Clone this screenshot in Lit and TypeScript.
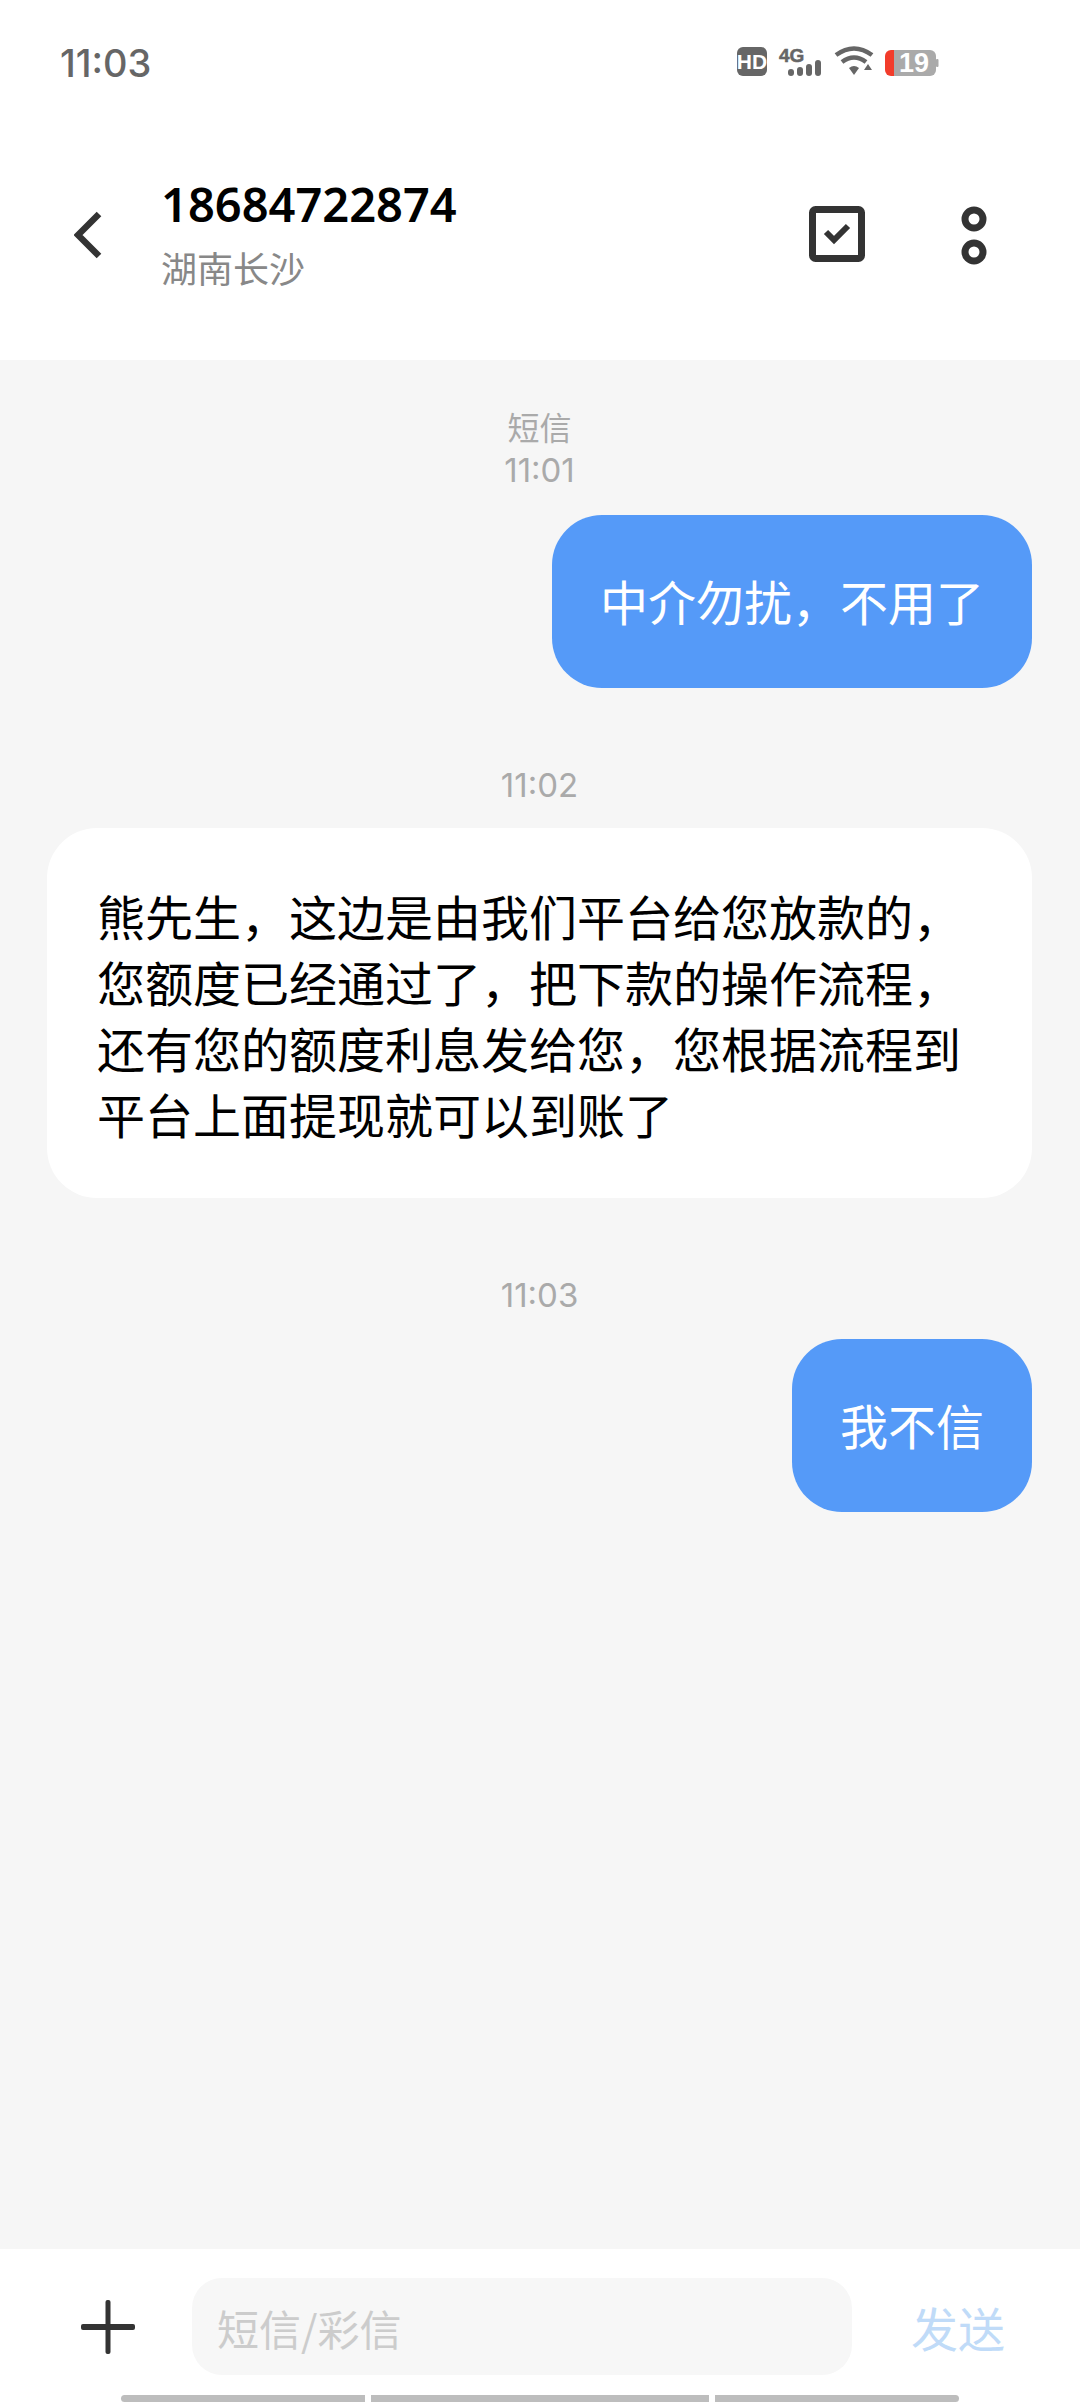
import { LitElement, html, css } from "lit";
import { customElement } from "lit/decorators.js";

const C = "\uFF0C";
const MSG1 = `中介勿扰${C}不用了`;
const MSG2 = `熊先生${C}这边是由我们平台给您放款的${C}您额度已经通过了${C}把下款的操作流程${C}还有您的额度利息发给您${C}您根据流程到平台上面提现就可以到账了`;

@customElement("app-root")
export class AppRoot extends LitElement {
  static styles = css`
    :host {
      display: block;
      width: 1080px;
      height: 2408px;
      font-family: "Noto Sans CJK SC", "Noto Sans", sans-serif;
      background: #fff;
      overflow: hidden;
    }
    .page { display: flex; flex-direction: column; height: 2408px; }
    .status {
      height: 122px; box-sizing: border-box; padding: 40px 141px 0 60px;
      display: flex; justify-content: space-between; align-items: flex-start;
    }
    .clock { font-size: 38px; line-height: 46px; font-weight: 500; color: #666; font-family: Inter, sans-serif; }
    .sicons { display: block; margin-top: 1px; }
    .head { height: 238px; display: flex; align-items: flex-start; box-sizing: border-box; padding: 0 0 0 74px; }
    .back { margin-top: 89px; flex: none; }
    .who { margin-left: 59px; margin-top: 54px; flex: 1; }
    .num { font-size: 47px; line-height: 56px; font-weight: 600; color: #000; font-family: "Noto Sans", sans-serif; }
    .loc { font-size: 36px; line-height: 48px; color: #888; margin-top: 11px; }
    .acts { display: flex; margin: 84px 93px 0 0; gap: 96px; align-items: flex-start; }
    .chat { flex: 1; background: #f6f6f6; padding: 0 48px 0 47px; display: flex; flex-direction: column; }
    .time { text-align: center; font-size: 32px; line-height: 44px; color: #aaa; }
    .time.first { margin-top: 44px; }
    .time.gap { margin-top: 75px; }
    .digits { display: block; font-family: Inter, sans-serif; font-size: 33px; }
    .bubble { font-size: 48px; line-height: 66px; border-radius: 50px; box-sizing: border-box; }
    .me {
      align-self: flex-end; background: #559af8; color: #fff;
      padding: 52px 48px 55px; margin-top: 23px;
    }
    .them {
      background: #fff; color: #000; padding: 54px 50px 52px; margin-top: 21px;
    }
    .time.gap + .me { margin-top: 22px; }
    .foot { height: 159px; box-sizing: border-box; position: relative; padding-top: 29px; }
    .bar { display: flex; align-items: center; height: 97px; }
    .plus { margin-left: 81px; flex: none; }
    .input {
      margin-left: 57px; width: 660px; height: 97px; background: #f7f7f7; border-radius: 30px;
      box-sizing: border-box; padding-left: 25px; font-size: 42px; line-height: 100px; color: #ccc;
    }
    .send { margin-left: 59px; font-size: 47px; color: #c0dbf8; line-height: 99px; }
    .segs { display: flex; gap: 6px; margin: 20px 0 0 121px; }
    .segs i { display: block; height: 7px; background: #bdbdbd; }
    .s1 { width: 244px; border-radius: 4px 0 0 4px; }
    .s2 { width: 338px; }
    .s3 { width: 244px; border-radius: 0 4px 4px 0; }
  `;

  render() {
    return html`
      <div class="page" lang="zh-CN">
        <div class="status">
          <div class="clock">11:03</div>
          <svg class="sicons" width="202" height="42" viewBox="0 -6 202 42">
            <rect x="0" y="0" width="30" height="29" rx="6" fill="#666"/>
            <text x="15" y="21.500" text-anchor="middle" font-family="Liberation Sans" font-weight="700" font-size="21" fill="#fff">HD</text>
            <text x="42" y="15" font-family="Liberation Sans" font-weight="700" font-size="19" fill="#666" stroke="#666" stroke-width="0.5">4G</text>
            <rect x="51" y="22" width="6" height="7" rx="3" fill="#666"/>
            <rect x="60" y="20" width="6" height="9" rx="3" fill="#666"/>
            <rect x="69" y="17" width="6" height="12" rx="3" fill="#666"/>
            <rect x="78" y="13" width="6" height="16" rx="3" fill="#666"/>
            <g fill="none" stroke="#666" stroke-width="4.6">
              <path d="M99 8 Q117 -5 135 8"/>
              <path d="M105 15 Q117 6 129 15"/>
            </g>
            <path d="M112 21 Q117 17 122 21 L117 28 Z" fill="#666"/>
            <path d="M127 23 L135 23 L131 17 Z" fill="#666"/>
            <path d="M154 3 H193 a6 6 0 0 1 6 6 V23 a6 6 0 0 1 -6 6 H154 Z" fill="#aaa"/>
            <path d="M157 3 V29 H154 a6 6 0 0 1 -6 -6 V9 a6 6 0 0 1 6 -6 Z" fill="#f23c2b"/>
            <rect x="199" y="12" width="2.500" height="8" rx="1" fill="#aaa"/>
            <text x="177" y="25" text-anchor="middle" font-family="Liberation Sans" font-weight="700" font-size="27" fill="#fff">19</text>
          </svg>
        </div>
        <div class="head">
          <svg class="back" width="28" height="48" viewBox="0 0 28 48">
            <path d="M25 3 L4 24 L25 45" fill="none" stroke="#333" stroke-width="6.500"/>
          </svg>
          <div class="who">
            <div class="num">18684722874</div>
            <div class="loc">湖南长沙</div>
          </div>
          <div class="acts">
            <svg width="56" height="56" viewBox="0 0 56 56">
              <rect x="3.500" y="3.500" width="49" height="49" rx="3" fill="none" stroke="#333" stroke-width="7"/>
              <path d="M17 26 L25 34 L39 20" fill="none" stroke="#333" stroke-width="6"/>
            </svg>
            <svg width="26" height="60" viewBox="0 0 26 60">
              <circle cx="13" cy="13" r="9" fill="none" stroke="#333" stroke-width="7"/>
              <circle cx="13" cy="46" r="9" fill="none" stroke="#333" stroke-width="7"/>
            </svg>
          </div>
        </div>
        <div class="chat">
          <div class="time first">短信<span class="digits">11:01</span></div>
          <div class="bubble me">${MSG1}</div>
          <div class="time gap"><span class="digits">11:02</span></div>
          <div class="bubble them">${MSG2}</div>
          <div class="time gap"><span class="digits">11:03</span></div>
          <div class="bubble me">我不信</div>
        </div>
        <div class="foot">
          <div class="bar">
            <svg class="plus" width="54" height="54" viewBox="0 0 54 54">
              <rect x="0" y="24" width="54" height="6" rx="2" fill="#333"/>
              <rect x="24.500" y="0" width="5" height="54" rx="2" fill="#333"/>
            </svg>
            <div class="input">短信/彩信</div>
            <div class="send">发送</div>
          </div>
          <div class="segs"><i class="s1"></i><i class="s2"></i><i class="s3"></i></div>
        </div>
      </div>
    `;
  }
}
